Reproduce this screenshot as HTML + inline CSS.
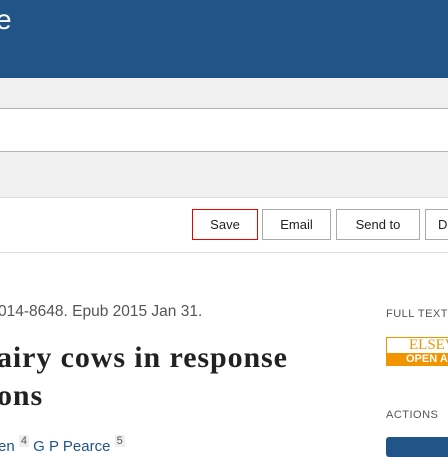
<!DOCTYPE html><html><head><style>
body{margin:0;width:448px;height:448px;overflow:hidden;position:relative;background:#fff;font-family:"Liberation Sans",sans-serif}
div{position:absolute}
.b{top:209px;height:31px;border:1px solid #aaa;background:#fff;font-size:13px;color:#222;text-align:center;line-height:30px;box-sizing:border-box}
</style></head><body>
<div style="left:0;top:0;width:448px;height:78px;background:#215588"></div>
<div style="left:-4px;top:4px;color:#fff;font-size:28px">e</div>
<div style="left:0;top:78px;width:448px;height:30px;background:#f0f0f0;border-bottom:1px solid #b5b5b5"></div>
<div style="left:0;top:151px;width:448px;height:45px;background:#f0f0f0;border-top:1px solid #b5b5b5;border-bottom:1px solid #ddd"></div>
<div class="b" style="left:192px;width:66px;border-color:#e00">Save</div>
<div class="b" style="left:262px;width:69px">Email</div>
<div class="b" style="left:336px;width:84px">Send to</div>
<div class="b" style="left:425px;width:40px;text-align:left;padding-left:12px">D</div>
<div style="left:0;top:252px;width:448px;height:1px;background:#ddd"></div>
<div style="left:-2px;top:303px;font-size:15.5px;color:#555;white-space:nowrap">014-8648. Epub 2015 Jan 31.</div>
<div style="left:-3px;top:339px;font-family:'Liberation Serif',serif;font-weight:bold;font-size:30px;letter-spacing:.9px;color:#222;line-height:38px;white-space:nowrap">airy cows in response<br>ons</div>
<div style="left:-2px;top:435px;font-size:15px;color:#215588;white-space:nowrap">en <span style="color:#555;background:#eee;font-size:11px;vertical-align:7px;padding:0 2px">4</span> G P Pearce <span style="color:#555;background:#eee;font-size:11px;vertical-align:7px;padding:0 2px">5</span></div>
<div style="left:386px;top:308px;font-size:11px;color:#555;letter-spacing:.5px">FULL TEXT</div>
<div style="left:386px;top:337px;width:70px;height:29px;border:1px solid #f29400;box-sizing:border-box;background:#fff"></div>
<div style="left:409px;top:337px;font-family:'Liberation Serif',serif;font-size:15px;color:#f29400">ELSEV</div>
<div style="left:386px;top:353px;width:70px;height:13px;background:#f29400;color:#fff;font-size:11px;font-weight:bold;padding-left:20px;line-height:13px">OPEN A</div>
<div style="left:386px;top:409px;font-size:11px;color:#555;letter-spacing:.5px">ACTIONS</div>
<div style="left:386px;top:437px;width:70px;height:20px;background:#215588;border-radius:3px"></div>
</body></html>
